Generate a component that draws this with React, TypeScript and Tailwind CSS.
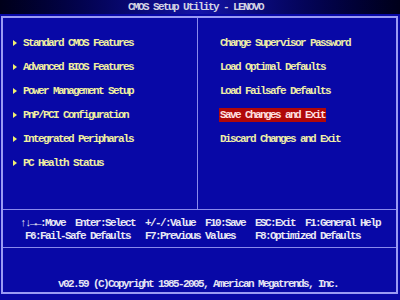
import React from 'react';

const leftItems = [
  'Standard CMOS Features',
  'Advanced BIOS Features',
  'Power Management Setup',
  'PnP/PCI Configuration',
  'Integrated Peripharals',
  'PC Health Status',
];

const rightItems = [
  'Change Supervisor Password',
  'Load Optimal Defaults',
  'Load Failsafe Defaults',
  'Save Changes and Exit',
  'Discard Changes and Exit',
];

const Arrow: React.FC = () => (
  <svg width="4" height="6" viewBox="0 0 4 6" className="shrink-0">
    <path d="M0 0 L4 3 L0 6 Z" fill="#f0f070" />
  </svg>
);

const App: React.FC = () => {
  return (
    <div className="w-[400px] h-[300px] overflow-hidden bg-[#0808a6] font-['Liberation_Mono','DejaVu_Sans_Mono',monospace] text-[11px] font-bold tracking-[-1.6px] leading-[12px]">
      {/* title bar */}
      <div className="h-[14px] flex items-center pl-[128px] bg-gradient-to-r from-[#00001a] via-[#1414a8] to-[#00001a] text-[#d4d4e4]">
        CMOS Setup Utility - LENOVO
      </div>

      {/* main box */}
      <div className="mt-[2px] ml-[1px] w-[397px] h-[278px] border-2 border-[#9a9af4] flex flex-col">
        <div className="h-[192px] border-b border-[#8a8aec] flex">
          <div className="w-[195px] border-r border-[#8a8aec] pl-[10px] pt-[19px] flex flex-col gap-[12px]">
            {leftItems.map((item) => (
              <div key={item} className="h-[12px] flex items-center gap-[6px] text-[#f0f0a0]">
                <Arrow />
                <span className="whitespace-pre">{item}</span>
              </div>
            ))}
          </div>
          <div className="flex-1 pl-[21px] pt-[19px] flex flex-col gap-[12px]">
            {rightItems.map((item) => (
              <div key={item} className="h-[12px] flex items-center">
                <span
                  className={
                    item === 'Save Changes and Exit'
                      ? 'whitespace-pre px-[1px] py-[1px] bg-[#b00808] text-[#ffe0e0]'
                      : 'whitespace-pre px-[1px] text-[#eeeea8]'
                  }
                >
                  {item}
                </span>
              </div>
            ))}
          </div>
        </div>

        {/* help keys */}
        <div className="h-[38px] border-b border-[#8a8aec] pt-[7px] flex flex-col gap-[1px] text-[#e8e8f4]">
          <div className="h-[12px] pl-[17px] whitespace-pre">
            {'↑↓→←:Move  Enter:Select  +/-/:Value  F10:Save  ESC:Exit  F1:General Help'}
          </div>
          <div className="h-[12px] pl-[22px] whitespace-pre">
            {'F6:Fail-Safe Defaults   F7:Previous Values    F8:Optimized Defaults'}
          </div>
        </div>

        {/* copyright */}
        <div className="flex-1 pt-[30px] pl-[55px] whitespace-pre text-[#e4e4f4]">
          v02.59 (C)Copyright 1985-2005, American Megatrends, Inc.
        </div>
      </div>
    </div>
  );
};

export default App;
